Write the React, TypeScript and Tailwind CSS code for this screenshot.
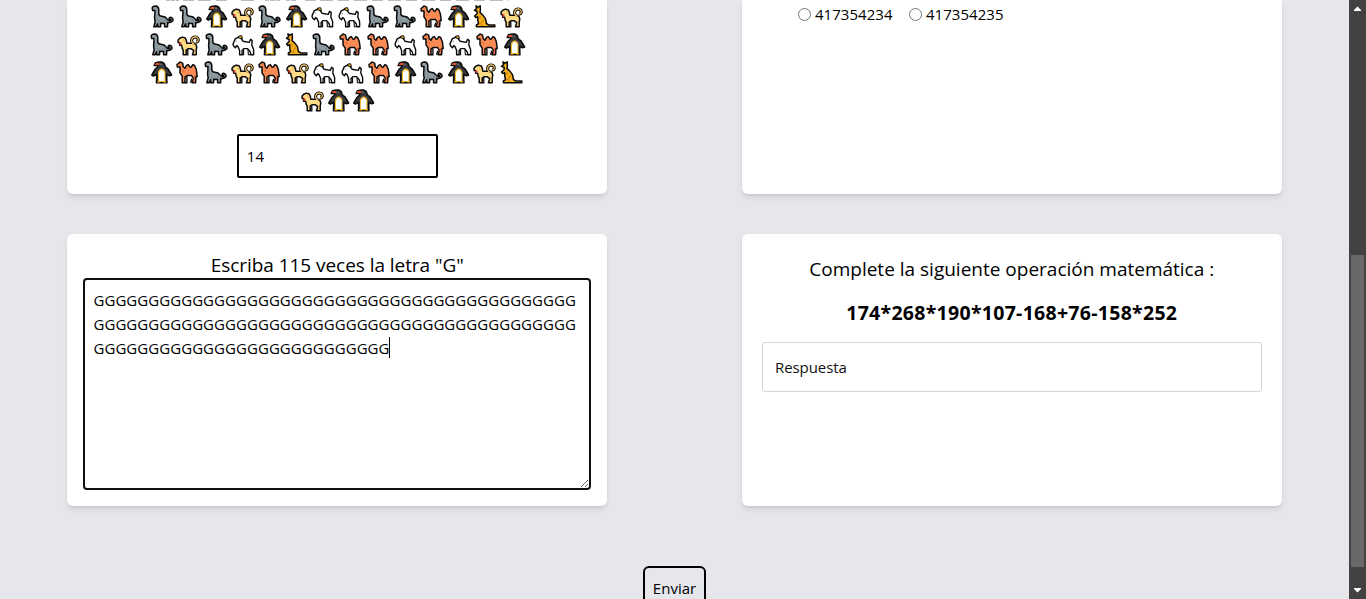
import React from 'react';

type Kind = 'D' | 'P' | 'Y' | 'G' | 'C' | 'K';

const rows = ['DDPYDPGGDDCPKY', 'DYDGPKDCCGCGCP', 'PCDYCYGGCPDPYK', 'YPP'];

const line = { stroke: '#0a0a0a', strokeWidth: 1.5, strokeLinejoin: 'round' as const };

function Art({ kind }: { kind: Kind }) {
  switch (kind) {
    case 'D':
      return (
        <g {...line} fill="#8e9ca2">
          <path d="M1.2 3Q1.6 1 4.6 1Q7.6 1.2 7.8 4.5V9Q8.4 11.4 11 11.2Q14.5 11.4 16 13.8Q17.6 16.2 19.6 15.6Q20.4 14.9 19.2 14.6Q17.8 14.6 18.2 13Q19.4 11.8 21 12.9Q22.4 14.2 21.8 15.9Q20.2 18 16.6 17.6V21.8H13.6V18.4L9.6 18.2V21.8H6.6V18.8L5 21.8H2.8L4.2 16.8Q3.2 13 3.9 9.5V5.4H1.6Z" />
          <path d="M7.4 15.2L8.4 17M13.5 14.8L14.6 16.8" stroke="#65747b" strokeWidth=".8" />
        </g>
      );
    case 'P':
      return (
        <g>
          <path {...line} fill="#37393e" d="M3.2 4.4L4.3 2Q7.2 .6 10.4 1.1Q14 2 14 5.6L17.2 8.2L20.6 14L18.6 14.8L15.8 13.4V19.4L16 21.8H5.4L5.6 19.4V13.4L2.4 15L.8 14L4.2 8.2L6.6 6L6.6 4.6Z" />
          <path d="M7 21V11Q8.2 7.4 10.7 7.4Q13.2 7.4 14.4 11V21Z" fill="#f5bd2c" />
          <path d="M8 20V11.4Q9 9 10.7 9Q12.4 9 13.4 11.4V20Z" fill="#fff" />
          <path d="M3.6 4.1L4.6 2.2Q6.8 1.2 8.8 2.2L8 3.9Z" fill="#d9562b" />
          <path d="M6.3 20.9H9.2M12.2 20.9H15.1" stroke="#f0a914" strokeWidth="1.2" />
          <path d="M9.6 3.3H10.5" stroke="#ddd" strokeWidth=".8" />
        </g>
      );
    case 'Y':
      return (
        <g>
          <path d="M17.5 11.5Q14.4 10.2 14.6 7.2Q15.2 4 18.2 3.9Q21.4 4.2 21.3 7.2Q20.8 9.4 18.8 9" fill="none" stroke="#0a0a0a" strokeWidth="3" />
          <path {...line} fill="#ffdb85" d="M1 7.3L2.7 5.3L5.4 4.1L8.3 5L9.4 7.6L9.8 10.2H15.4L18.9 11.2L19.8 14.2L19.2 16.8V21.8H15.4L16.8 17.6L14.4 15.8H11L9.2 17.2V21.8H6.2V17.2L5.2 15.3L4.6 12.2H2.7L2.4 9.5H1.2Z" />
          <path d="M17.5 11.5Q14.4 10.2 14.6 7.2Q15.2 4 18.2 3.9Q21.4 4.2 21.3 7.2Q20.8 9.4 18.8 9" fill="none" stroke="#f2c469" strokeWidth="1.1" />
          <path d="M2.2 9.3L4.6 9.6L4 12L2.5 11.6Z" fill="#d6332e" />
          <path d="M10.8 16.5V21.8H9.6" fill="none" stroke="#0a0a0a" strokeWidth="1.3" />
          <path d="M6.5 5.5L6.8 8L8.1 8.6M17.8 17.5V21" fill="none" stroke="#e5ad4e" strokeWidth=".8" />
        </g>
      );
    case 'G':
      return (
        <g>
          <path {...line} strokeWidth="1.4" fill="#fff" d="M1 11L3.2 5.9L6.2 4.3L8.8 5L11 8.2L17.2 9.4L18.6 6.3L20.2 7.6L19.8 12L21.6 16.5V21.8H19L18 18.4L15.4 15.6H12L10.1 17.6V21.8H7.6V17.6L6 13.6L4.6 12.6L3.4 14.8L1.6 13Z" />
          <path d="M5.3 4.3Q7 1.4 10 2.4L11.1 5.7L9.2 5.8Z" fill="#0a0a0a" />
          <path d="M6.7 4Q8.4 2.6 9.5 3.6L9.9 4.9L8.6 4.9Z" fill="#f2b21d" />
          <path d="M3.9 8.3H4.8" stroke="#555" strokeWidth=".8" />
          <path d="M11.6 17V21.8H10M16 17L16.4 21.8H19" fill="none" stroke="#0a0a0a" strokeWidth="1.1" />
        </g>
      );
    case 'C':
      return (
        <g>
          <path {...line} fill="#fa8b55" d="M1 3.5L3.2 1.9L4 .9L6.6 2.1L7.3 5.8L8.9 7.3L10.5 4.4L12.3 3.6L14 6.2H15.2L16.8 3.7L18.6 4.5L20.3 8.5L21.2 15.4L20 15.6L19.6 21.8H16L17.4 17.4L15.4 14.4H11.4L9 16.2V21.8H6.2V15.2L4 11.8V5.9H1.3Z" />
          <path d="M18.6 15L18 21" stroke="#d65d32" strokeWidth="1.1" />
          <path d="M10.9 15.5V21.8H9M14.6 21.8L15.8 17.6" fill="none" stroke="#0a0a0a" strokeWidth="1.4" />
          <path d="M4.3 3.3H5.1M6.4 9L8.2 11" stroke="#ba4e29" strokeWidth=".8" />
        </g>
      );
    case 'K':
      return (
        <g>
          <path {...line} fill="#f5b01e" d="M1.5 5.4L3.6 3.6L2.9 1L5 2.2L7.2 .9L7.4 5L7 7.6L9.4 9.6L12.5 13.6L13.4 18.5L16 20.1H21.8V21.8H3.4V20L5.6 18.6L4.8 15.7L4.7 11.8L2.8 12.6L1.6 11.1L4 8.8L4.2 6.5Z" />
          <path d="M6.9 10.5L7.3 14M11.1 14.2L7.8 18.2L9.2 20.2" fill="none" stroke="#ca800c" strokeWidth="1.1" />
        </g>
      );
  }
}

function Animal({ kind }: { kind: Kind }) {
  return (
    <span className={kind === 'P' ? 'flex w-[25px] shrink-0 justify-center pb-px' : 'flex w-[27.4px] shrink-0 justify-center pb-px'}>
      <svg viewBox="0 0 23 23" className={kind === 'P' ? 'ml-[2px] h-[23px] w-[23px] shrink-0' : 'h-[23px] w-[23px] shrink-0'}>
        <Art kind={kind} />
      </svg>
    </span>
  );
}

function Scrollbar() {
  return (
    <div className="flex h-full w-[17px] shrink-0 flex-col items-center bg-[#424242]">
      <svg viewBox="0 0 17 17" className="h-[17px] w-[17px]"><path d="M5 11V10L8.5 6.5L12 10V11Z" fill="#fff" /></svg>
      <div className="mt-[238px] h-[312px] w-[13px] bg-[#686868]" />
      <svg viewBox="0 0 17 17" className="mt-auto h-[17px] w-[17px]"><path d="M5 6V7L8.5 10.5L12 7V6Z" fill="#fff" /></svg>
    </div>
  );
}

export default function App() {
  return (
    <div className="flex h-[599px] w-[1366px] overflow-hidden bg-gray-200 font-['Open_Sans',sans-serif] text-[15px] text-black">
      <main className="flex h-full w-[1349px] flex-col items-center overflow-hidden">
        <div className="grid w-full grid-cols-2 justify-items-center gap-y-10">
          <section className="flex h-[194px] w-4/5 flex-col items-center rounded-b-md bg-white shadow-md">
            <svg viewBox="0 0 342 3" className="h-[3px] w-[342px] shrink-0">
              <path
                d="M0 .5H342"
                stroke="#bdbdbd"
                strokeDasharray="4 1 4 1 3 4 11 4 13 5 11 14 13 11 4 1 5 1 4 6 4 1 5 9 11 4 13 5 11 5 13 5 11 5 13 5 11 5 13 5 11 5 13 5 11 5 13"
              />
            </svg>
            {rows.map((row) => (
              <div key={row} className="flex h-7 shrink-0 items-center justify-center">
                {row.split('').map((kind, i) => <Animal key={i} kind={kind as Kind} />)}
              </div>
            ))}
            <input defaultValue="14" className="mt-[19px] h-11 w-[201px] shrink-0 rounded-[2px] border-2 border-black px-2 tracking-[0.05px] outline-none" />
          </section>
          <section className="h-[194px] w-4/5 rounded-b-md bg-white pt-0.5 pl-14 shadow-md">
            <div className="flex h-6 gap-4">
              <label className="flex items-center gap-1"><input type="radio" name="answer" className="m-0 h-[13px] w-[13px]" /><span className="w-[78px] tracking-[0.04px]">417354234</span></label>
              <label className="flex items-center gap-1"><input type="radio" name="answer" className="m-0 h-[13px] w-[13px]" /><span className="w-[78px] tracking-[0.04px]">417354235</span></label>
            </div>
          </section>
          <section className="flex h-[272px] w-4/5 flex-col rounded-md bg-white p-4 shadow-md">
            <h2 className="h-7 pt-px text-center text-[19px] leading-7 tracking-[-0.05px] whitespace-nowrap">Escriba 115 veces la letra "G"</h2>
            <div className="relative h-[212px]">
              <textarea
                defaultValue={'G'.repeat(115)}
                className="block h-[212px] w-full rounded border-2 border-[#101010] p-2 leading-6 tracking-[0.06px] outline-none"
              />
              <span className="absolute top-[59px] left-[306px] h-[21px] w-px bg-black" />
            </div>
          </section>
          <section className="flex h-[272px] w-4/5 flex-col rounded-md bg-white p-5 text-center shadow-md">
            <h2 className="mb-[15px] pt-px text-[19px] leading-7 whitespace-nowrap">Complete la siguiente operación matemática :</h2>
            <p className="mb-[15px] pt-px text-[19.5px] leading-7 font-bold tracking-[0.28px] whitespace-nowrap">174*268*190*107-168+76-158*252</p>
            <input placeholder="Respuesta" className="h-[50px] w-full rounded-[3px] border border-gray-300 px-3 tracking-[-0.07px] outline-none placeholder:text-[#111]" />
          </section>
        </div>
        <button className="mt-[60px] h-11 w-[63px] shrink-0 rounded-md border-2 border-black text-center leading-6">Enviar</button>
      </main>
      <Scrollbar />
    </div>
  );
}
